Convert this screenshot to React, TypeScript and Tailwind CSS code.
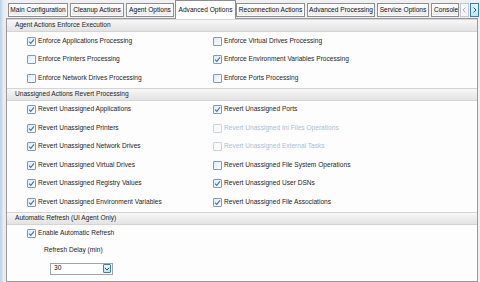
import React from 'react';

type Item = { label: string; checked: boolean; disabled?: boolean };

const enforceLeft: Item[] = [
  { label: 'Enforce Applications Processing', checked: true },
  { label: 'Enforce Printers Processing', checked: false },
  { label: 'Enforce Network Drives Processing', checked: false },
];
const enforceRight: Item[] = [
  { label: 'Enforce Virtual Drives Processing', checked: false },
  { label: 'Enforce Environment Variables Processing', checked: true },
  { label: 'Enforce Ports Processing', checked: false },
];
const revertLeft: Item[] = [
  { label: 'Revert Unassigned Applications', checked: true },
  { label: 'Revert Unassigned Printers', checked: true },
  { label: 'Revert Unassigned Network Drives', checked: true },
  { label: 'Revert Unassigned Virtual Drives', checked: true },
  { label: 'Revert Unassigned Registry Values', checked: true },
  { label: 'Revert Unassigned Environment Variables', checked: true },
];
const revertRight: Item[] = [
  { label: 'Revert Unassigned Ports', checked: true },
  { label: 'Revert Unassigned Ini Files Operations', checked: false, disabled: true },
  { label: 'Revert Unassigned External Tasks', checked: false, disabled: true },
  { label: 'Revert Unassigned File System Operations', checked: false },
  { label: 'Revert Unassigned User DSNs', checked: true },
  { label: 'Revert Unassigned File Associations', checked: true },
];

const tabs = [
  { label: 'Main Configuration', cls: 'w-[60px] mr-[2px]' },
  { label: 'Cleanup Actions', cls: 'w-[54px] mr-[2px]' },
  { label: 'Agent Options', cls: 'w-[48px] mr-[1px]' },
  { label: 'Advanced Options', cls: 'w-[61px]', active: true },
  { label: 'Reconnection Actions', cls: 'w-[69px] mr-[2px]' },
  { label: 'Advanced Processing', cls: 'w-[68px] mr-[2px]' },
  { label: 'Service Options', cls: 'w-[52px] mr-[2px]' },
  { label: 'Console', cls: 'w-[28px] mr-[1px] justify-start pl-[2px] overflow-hidden' },
];

const Check = ({ checked, disabled }: { checked: boolean; disabled?: boolean }) => (
  <span
    className={`flex h-[9px] w-[9px] shrink-0 items-center justify-center rounded-[1px] border ${
      disabled ? 'border-[#c9d6e2] bg-[#f7f9fb]' : 'border-[#7a9cc0] bg-gradient-to-br from-[#dfe9f3] to-white'
    }`}
  >
    {checked && (
      <svg width="7" height="7" viewBox="0 0 7 7">
        <path d="M1 3.6 L2.8 5.4 L6 1.4" fill="none" stroke="#3b73b0" strokeWidth="1.1" />
      </svg>
    )}
  </span>
);

const Row = ({ item }: { item: Item }) => (
  <div className="flex h-[18.5px] items-center gap-[1px]">
    <Check checked={item.checked} disabled={item.disabled} />
    <span className={`ml-[1px] whitespace-nowrap ${item.disabled ? 'text-[#a9bfd4]' : 'text-[#1e1e1e]'}`}>{item.label}</span>
  </div>
);

const Header = ({ title }: { title: string }) => (
  <div className="flex h-[13px] shrink-0 items-center border-y border-[#d4d4d4] bg-gradient-to-b from-[#f7f7f7] to-[#e3e3e3] pl-[8px] text-[#1e1e1e]">
    {title}
  </div>
);

const Columns = ({ left, right }: { left: Item[]; right: Item[] }) => (
  <div className="flex">
    <div className="ml-[20px] w-[186px] shrink-0">
      {left.map((i) => (
        <Row key={i.label} item={i} />
      ))}
    </div>
    <div>
      {right.map((i) => (
        <Row key={i.label} item={i} />
      ))}
    </div>
  </div>
);

export default function App() {
  return (
    <div
      className="flex h-[282px] w-[480px] overflow-hidden bg-[#f0f0f0] text-[6.6px] leading-none"
      style={{ fontFamily: '"Liberation Sans", Arial, sans-serif' }}
    >
      <div className="w-[3px] shrink-0 bg-gradient-to-r from-[#b9d1ea] to-[#dbe7f3]" />
      <div className="w-[3px] shrink-0 bg-[#ececec]" />
      <div className="flex min-w-0 flex-1 flex-col">
        <div className="flex h-[18px] shrink-0 items-end overflow-visible pl-[2px]">
          {tabs.map((t) =>
            t.active ? (
              <div
                key={t.label}
                className={`${t.cls} relative z-10 -mb-[1px] flex h-[19px] shrink-0 items-center justify-center border border-b-0 border-[#8c8e94] bg-white text-[#111]`}
              >
                {t.label}
              </div>
            ) : (
              <div
                key={t.label}
                className={`${t.cls} mb-[1px] flex h-[14px] shrink-0 items-center justify-center whitespace-nowrap border border-[#8c8e94] bg-gradient-to-b from-white to-[#e8e8e8] text-[#111] shadow-[inset_0_0_0_1px_#ffffff]`}
              >
                {t.label}
              </div>
            )
          )}
          <div className="mb-[1px] flex h-[14px] w-[9px] shrink-0 items-center justify-center border border-[#c3c7cc] bg-[#f4f6f8]">
            <svg width="5" height="6" viewBox="0 0 5 6">
              <path d="M3.5 0.5 L1 3 L3.5 5.5" fill="none" stroke="#9fb4c8" strokeWidth="1" />
            </svg>
          </div>
          <div className="mb-[1px] ml-[1px] flex h-[14px] w-[9px] shrink-0 items-center justify-center border border-[#3c7fb1] bg-gradient-to-b from-[#eaf6fd] to-[#bee6fd]">
            <svg width="5" height="6" viewBox="0 0 5 6">
              <path d="M1.5 0.5 L4 3 L1.5 5.5" fill="none" stroke="#1e5f99" strokeWidth="1" />
            </svg>
          </div>
        </div>
        <div className="mr-[2px] flex flex-1 flex-col border border-[#9a9a9a] bg-[#fdfdfd]">
          <Header title="Agent Actions Enforce Execution" />
          <Columns left={enforceLeft} right={enforceRight} />
          <Header title="Unassigned Actions Revert Processing" />
          <Columns left={revertLeft} right={revertRight} />
          <Header title="Automatic Refresh (UI Agent Only)" />
          <div className="ml-[20px]">
            <Row item={{ label: 'Enable Automatic Refresh', checked: true }} />
          </div>
          <div className="ml-[37px] mt-[4px] text-[#1e1e1e]">Refresh Delay (min)</div>
          <div className="ml-[43px] mt-[9px] flex h-[12px] w-[63px] items-center border border-[#9da4ab] bg-white">
            <span className="flex-1 pl-[3px] text-[#111]">30</span>
            <span className="mr-[1px] flex h-[9px] w-[8px] items-center justify-center rounded-[1px] border border-[#3c7fb1] bg-gradient-to-b from-[#eaf6fd] to-[#bee6fd]">
              <svg width="6" height="4" viewBox="0 0 6 4">
                <path d="M0.8 0.8 L3 3 L5.2 0.8" fill="none" stroke="#1e5f99" strokeWidth="1" />
              </svg>
            </span>
          </div>
        </div>
      </div>
    </div>
  );
}
